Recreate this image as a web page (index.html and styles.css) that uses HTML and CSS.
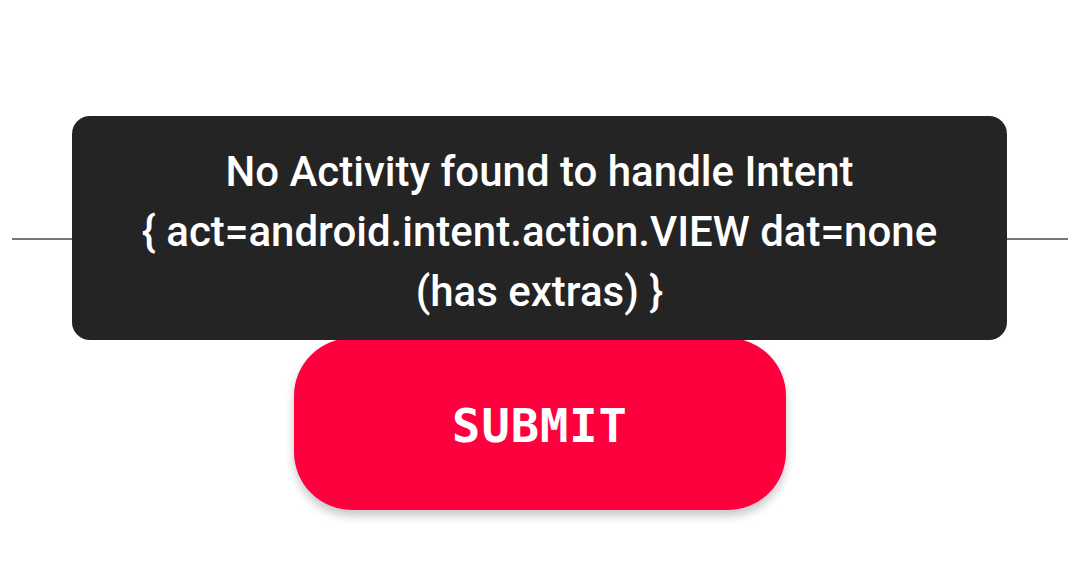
FILE: index.html
```html
<!DOCTYPE html>
<html lang="en">
<head>
    <meta charset="UTF-8">
    <meta name="viewport" content="width=device-width, initial-scale=1.0">
    <title>Submit</title>
    <link rel="stylesheet" href="styles.css">
</head>
<body>
    <div class="screen">
        <div class="divider"></div>
        <button class="submit-button">SUBMIT</button>
    </div>

    <div class="toast">
        No Activity found to handle Intent<br>
        { act=android.intent.action.VIEW dat=none<br>
        (has extras) }
    </div>
</body>
</html>
```

FILE: styles.css
```css
html, body {
    margin: 0;
    height: 100%;
    background-color: #fff;
    font-family: Roboto, "Liberation Sans", sans-serif;
}
.screen {
    display: flex;
    flex-direction: column;
    align-items: center;
    padding: 238px 12px 0;
}
.divider {
    width: 100%;
    height: 2px;
    background-color: #757575;
}
.submit-button {
    margin-top: 98px;
    width: 492px;
    height: 172px;
    border: none;
    border-radius: 58px;
    background-color: #ff003f;
    color: #fff;
    font-family: "DejaVu Sans Mono", monospace;
    font-weight: bold;
    font-size: 47px;
    letter-spacing: 1px;
    padding-top: 4px;
    box-shadow: 0 6px 10px rgba(0, 0, 0, 0.22);
    cursor: pointer;
}
.toast {
    position: absolute;
    top: 116px;
    left: 72px;
    width: 935px;
    box-sizing: border-box;
    padding: 26px 10px 18px;
    border-radius: 18px;
    background-color: #242424;
    color: #fff;
    font-size: 42px;
    font-weight: 500;
    line-height: 60px;
    text-align: center;
}
```
